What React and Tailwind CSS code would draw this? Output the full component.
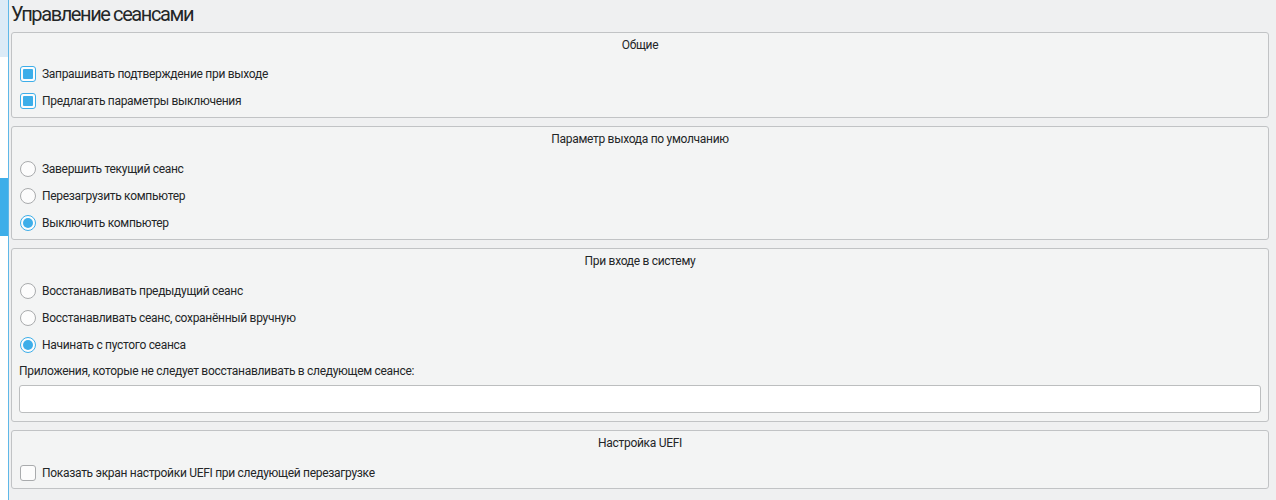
import React from 'react'

const Checkbox = ({ checked }) => (
  <span
    className={`flex h-4 w-4 shrink-0 items-center justify-center rounded-[3px] border bg-[#fcfcfc] ${
      checked ? 'border-[#3daee9]' : 'border-[#a9abad]'
    }`}
  >
    {checked && <span className="h-[10px] w-[10px] rounded-[1px] bg-[#3daee9]" />}
  </span>
)

const Radio = ({ checked }) => (
  <span
    className={`flex h-4 w-4 shrink-0 items-center justify-center rounded-full border bg-[#fcfcfc] ${
      checked ? 'border-[#3daee9]' : 'border-[#a9abad]'
    }`}
  >
    {checked && <span className="h-[10px] w-[10px] rounded-full bg-[#3daee9]" />}
  </span>
)

const Row = ({ children, label }) => (
  <div className="flex h-[27px] items-center gap-[6px] pl-2">
    {children}
    <span>{label}</span>
  </div>
)

const Group = ({ title, children, pad = 'pb-[2px]', head = 'h-[28px]' }) => (
  <section className={`rounded-[3px] border border-[#c1c3c5] bg-[#f3f4f4] ${pad}`}>
    <div className={`${head} pt-[4px] text-center leading-4 text-[#232627]`}>{title}</div>
    {children}
  </section>
)

export default function App() {
  return (
    <div
      className="flex h-[500px] w-[1276px] bg-[#eff0f1] text-[12px] tracking-[-0.3px] text-[#232627]"
      style={{ fontFamily: 'Roboto, "Noto Sans", sans-serif' }}
    >
      {/* обрезанная боковая панель */}
      <div className="flex w-[9px] shrink-0 flex-col border-r border-[#5fb8e8] bg-white">
        <div className="h-[57px] bg-[#dcebf7]" />
        <div className="h-[121px]" />
        <div className="h-[58px] bg-[#3daee9]" />
      </div>

      <main className="flex flex-1 flex-col pl-[2px] pr-[7px]">
        <h1 className="h-[32px] pt-[1px] text-[20px] leading-[26px] tracking-[-1.4px] text-[#232627]">
          Управление сеансами
        </h1>

        <div className="flex flex-col gap-2">
          <Group title="Общие" head="h-[27px]" pad="pb-[3px]">
            <Row label="Запрашивать подтверждение при выходе"><Checkbox checked /></Row>
            <Row label="Предлагать параметры выключения"><Checkbox checked /></Row>
          </Group>

          <Group title="Параметр выхода по умолчанию" pad="pb-[3px]">
            <Row label="Завершить текущий сеанс"><Radio /></Row>
            <Row label="Перезагрузить компьютер"><Radio /></Row>
            <Row label="Выключить компьютер"><Radio checked /></Row>
          </Group>

          <Group title="При входе в систему" pad="pb-1">
            <Row label="Восстанавливать предыдущий сеанс"><Radio /></Row>
            <Row label="Восстанавливать сеанс, сохранённый вручную"><Radio /></Row>
            <Row label="Начинать с пустого сеанса"><Radio checked /></Row>
            <div className="flex h-[26px] items-center pl-[7px]">
              Приложения, которые не следует восстанавливать в следующем сеансе:
            </div>
            <div className="mt-[1px] px-[7px] pb-1">
              <input
                type="text"
                className="h-[28px] w-full rounded-[3px] border border-[#bcbebf] bg-white px-2 outline-none"
              />
            </div>
          </Group>

          <Group title="Настройка UEFI">
            <Row label="Показать экран настройки UEFI при следующей перезагрузке"><Checkbox /></Row>
          </Group>
        </div>
      </main>
    </div>
  )
}
